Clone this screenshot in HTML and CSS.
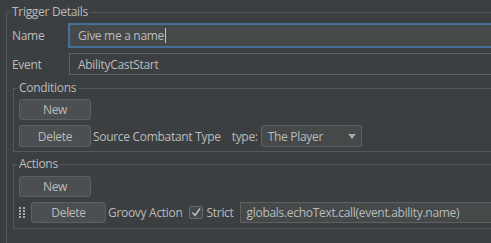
FILE: index.html
```html
<!DOCTYPE html>
<html>
<head>
<meta charset="utf-8">
<link rel="stylesheet" href="styles.css">
</head>
<body>
<fieldset class="group outer">
  <legend class="title">Trigger Details</legend>
  <div class="form">
    <label class="lbl">Name</label>
    <div class="field focused">Give me a name<span class="caret"></span></div>
    <label class="lbl">Event</label>
    <div class="field plain">AbilityCastStart</div>
  </div>

  <fieldset class="group inner conditions">
    <legend class="title">Conditions</legend>
    <div class="row"><button class="btn">New</button></div>
    <div class="row">
      <button class="btn">Delete</button>
      <span class="txt src">Source Combatant Type</span>
      <span class="txt typelbl">type:</span>
      <div class="combo">The Player<span class="arrow"></span></div>
    </div>
  </fieldset>

  <fieldset class="group inner actions">
    <legend class="title">Actions</legend>
    <div class="row"><button class="btn">New</button></div>
    <div class="row">
      <svg class="grip" width="6" height="12" viewBox="0 0 6 12">
        <g fill="#a9abad">
          <rect x="0" y="0" width="2" height="2"/><rect x="4" y="0" width="2" height="2"/>
          <rect x="0" y="3" width="2" height="2"/><rect x="4" y="3" width="2" height="2"/>
          <rect x="0" y="6" width="2" height="2"/><rect x="4" y="6" width="2" height="2"/>
          <rect x="0" y="9" width="2" height="2"/><rect x="4" y="9" width="2" height="2"/>
        </g>
      </svg>
      <button class="btn wide">Delete</button>
      <span class="txt groovy">Groovy Action</span>
      <span class="check">
        <svg width="14" height="13" viewBox="0 0 14 13"><path d="M3.5 6.5 L6 9.5 L11 2.5" fill="none" stroke="#bbbbbb" stroke-width="1.6"/></svg>
      </span>
      <span class="txt strict">Strict</span>
      <div class="field code">globals.echoText.call(event.ability.name)</div>
    </div>
  </fieldset>
</fieldset>
</body>
</html>
```
FILE: styles.css
```css
html, body {
  margin: 0;
  padding: 0;
  background: #3c3f41;
  overflow: hidden;
  width: 491px;
  height: 243px;
}
body {
  font-family: "Open Sans", "Noto Sans", sans-serif;
  font-size: 12px;
  letter-spacing: -0.3px;
  color: #bbbbbb;
}
.group {
  border: 1px solid #555759;
  margin: 0;
  min-width: 0;
}
.title {
  padding: 0 2px;
  line-height: 16px;
  font-size: 12px;
  color: #bbbbbb;
}
.outer {
  margin-left: 6px;
  margin-top: 4px;
  width: 620px;
  padding: 0 0 20px 3px;
}
.form {
  display: grid;
  grid-template-columns: 56px 1fr;
  row-gap: 5px;
  margin-left: 2px;
  margin-top: 3px;
  align-items: center;
}
.lbl {
  font-size: 12px;
}
.field {
  box-sizing: border-box;
  font-size: 12px;
  display: flex;
  align-items: center;
  padding-left: 8px;
  color: #bbbbbb;
}
.focused {
  height: 25px;
  border: 2px solid #46709a;
  background: #45494a;
  padding-left: 8px;
}
.caret {
  display: inline-block;
  width: 1px;
  height: 15px;
  background: #c8c8c8;
  margin-left: 1px;
}
.plain {
  height: 22px;
  margin-left: 1px;
  border: 1px solid #5e6060;
  background: #3c3f41;
}
.inner {
  margin-left: 3px;
  padding: 0 0 4px 4px;
}
.inner .title {
  margin-left: -1px;
}
.conditions {
  margin-top: 5px;
  padding-top: 3px;
}
.actions {
  margin-top: 4px;
  padding-top: 4px;
  padding-bottom: 5px;
}
.row {
  display: flex;
  align-items: center;
  margin-left: 1px;
}
.row + .row {
  margin-top: 5px;
}
.btn {
  box-sizing: border-box;
  width: 72px;
  height: 21px;
  margin: 0;
  padding: 0;
  border: 1px solid #5e6060;
  border-radius: 3px;
  background: #4b4f51;
  color: #bbbbbb;
  font-family: inherit;
  font-size: 12px;
  letter-spacing: -0.3px;
}
.conditions .row + .row .btn {
  height: 22px;
}
.btn.wide {
  width: 75px;
  height: 21px;
}
.txt {
  font-size: 12px;
  white-space: nowrap;
}
.src {
  margin-left: 2px;
}
.typelbl {
  margin-left: 11px;
}
.combo {
  box-sizing: border-box;
  position: relative;
  width: 101px;
  height: 22px;
  margin-left: 3px;
  border: 1px solid #5e6060;
  border-radius: 2px;
  background: #45494a;
  font-size: 12px;
  display: flex;
  align-items: center;
  padding-left: 6px;
}
.arrow {
  position: absolute;
  right: 5px;
  top: 8px;
  width: 0;
  height: 0;
  border-left: 4px solid transparent;
  border-right: 4px solid transparent;
  border-top: 5px solid #a5a7a9;
}
.grip {
  display: block;
  margin-right: 6px;
}
.groovy {
  margin-left: 2px;
}
.check {
  box-sizing: border-box;
  display: inline-flex;
  width: 14px;
  height: 13px;
  margin-left: 6px;
  border: 1px solid #6b6e70;
  border-radius: 2px;
  background: #43474a;
  position: relative;
}
.check svg {
  position: absolute;
  left: -1px;
  top: -1px;
}
.strict {
  margin-left: 4px;
}
.code {
  height: 21px;
  margin-left: 6px;
  width: 300px;
  flex: none;
  border: 1px solid #5e6060;
  background: #45494a;
  padding-left: 6px;
}
```
